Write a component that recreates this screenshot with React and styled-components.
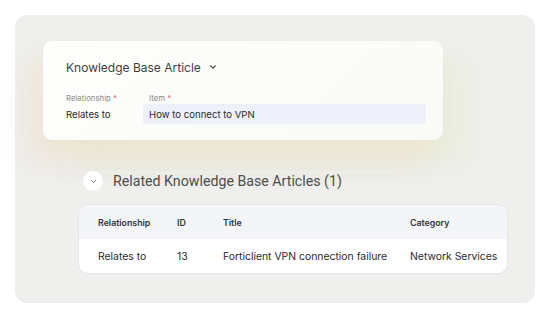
import styled, { createGlobalStyle } from "styled-components"

const Global = createGlobalStyle`
  body {
    margin: 0;
    background: #ffffff;
    font-family: Inter, "Liberation Sans", sans-serif;
  }
`

const Frame = styled.div`
  padding: 15px;
`

const Panel = styled.div`
  width: 520px;
  height: 288px;
  box-sizing: border-box;
  border-radius: 12px;
  background: #efefed;
  padding: 26px 0 0 28px;
  display: flex;
  flex-direction: column;
`

const Card = styled.div`
  width: 400px;
  height: 99px;
  box-sizing: border-box;
  border-radius: 9px;
  background: linear-gradient(135deg, #fefefd 0%, #fbfcf8 60%, #fafbf6 100%);
  padding: 17px 17px 0 23px;
  box-shadow:
    -8px 14px 24px rgba(238, 230, 175, 0.25),
    -16px 22px 28px rgba(242, 212, 206, 0.28),
    26px 22px 28px rgba(226, 236, 192, 0.32),
    0 1px 2px rgba(0, 0, 0, 0.03);
`

const CardTitle = styled.div`
  display: flex;
  align-items: center;
  gap: 8px;
  height: 18px;
  font-size: 12px;
  color: #3f3f3f;
`

const Fields = styled.div`
  margin-top: 16px;
  display: grid;
  grid-template-columns: 77px 1fr;
  grid-template-rows: 12px 20px;
  align-items: center;
`

const Label = styled.div`
  font-size: 7.8px;
  color: #8a8a8a;
  padding-left: ${p => (p.$inset ? "6px" : "0")};
  & > span {
    color: #e26b6b;
  }
`

const Value = styled.div`
  font-size: 9.6px;
  color: #2a2a2a;
`

const Input = styled.div`
  height: 20px;
  display: flex;
  align-items: center;
  padding-left: 6px;
  border-radius: 3px;
  background: #eef1f9;
  font-size: 9.6px;
  color: #2a2a2a;
`

const Section = styled.div`
  margin-top: 31px;
  display: flex;
  flex-direction: column;
`

const SectionHead = styled.div`
  display: flex;
  align-items: center;
  gap: 10px;
  margin-left: 40px;
  height: 20px;
`

const Toggle = styled.div`
  width: 20px;
  height: 20px;
  border-radius: 50%;
  background: #ffffff;
  display: flex;
  align-items: center;
  justify-content: center;
`

const SectionTitle = styled.div`
  font-family: Roboto, "Liberation Sans", sans-serif;
  font-size: 14.2px;
  color: #4d4d4d;
`

const Table = styled.div`
  margin-top: 14px;
  margin-left: 36px;
  width: 428px;
  border-radius: 9px;
  overflow: hidden;
  background: #ffffff;
  box-shadow: 0 0 0 1px #e4e5e9;
`

const Row = styled.div`
  display: grid;
  grid-template-columns: 79px 46px 187px 1fr;
  align-items: center;
  height: 34px;
  padding-left: 19px;
  background: ${p => (p.$head ? "#f4f5f8" : "#ffffff")};
  font-size: ${p => (p.$head ? "8.8px" : "10.4px")};
  font-weight: ${p => (p.$head ? 600 : 400)};
  color: ${p => (p.$head ? "#333" : "#2a2a2a")};
  white-space: nowrap;
`

const Chevron = ({ size = 8, color = "#444", width = 1.4 }) => (
  <svg width={size} height={size} viewBox="0 0 10 10">
    <path d="M2 3.5 L5 6.5 L8 3.5" fill="none" stroke={color} strokeWidth={width} strokeLinecap="round" strokeLinejoin="round" />
  </svg>
)

const App = () => {
  return (
    <Frame>
      <Global />
      <Panel>
        <Card>
          <CardTitle>
            Knowledge Base Article <Chevron size={8} width={1.5} />
          </CardTitle>
          <Fields>
            <Label>Relationship <span>*</span></Label>
            <Label $inset>Item <span>*</span></Label>
            <Value>Relates to</Value>
            <Input>How to connect to VPN</Input>
          </Fields>
        </Card>
        <Section>
          <SectionHead>
            <Toggle><Chevron size={7} color="#666" width={1.3} /></Toggle>
            <SectionTitle>Related Knowledge Base Articles (1)</SectionTitle>
          </SectionHead>
          <Table>
            <Row $head>
              <div>Relationship</div>
              <div>ID</div>
              <div>Title</div>
              <div>Category</div>
            </Row>
            <Row>
              <div>Relates to</div>
              <div>13</div>
              <div>Forticlient VPN connection failure</div>
              <div>Network Services</div>
            </Row>
          </Table>
        </Section>
      </Panel>
    </Frame>
  )
}

export default App
